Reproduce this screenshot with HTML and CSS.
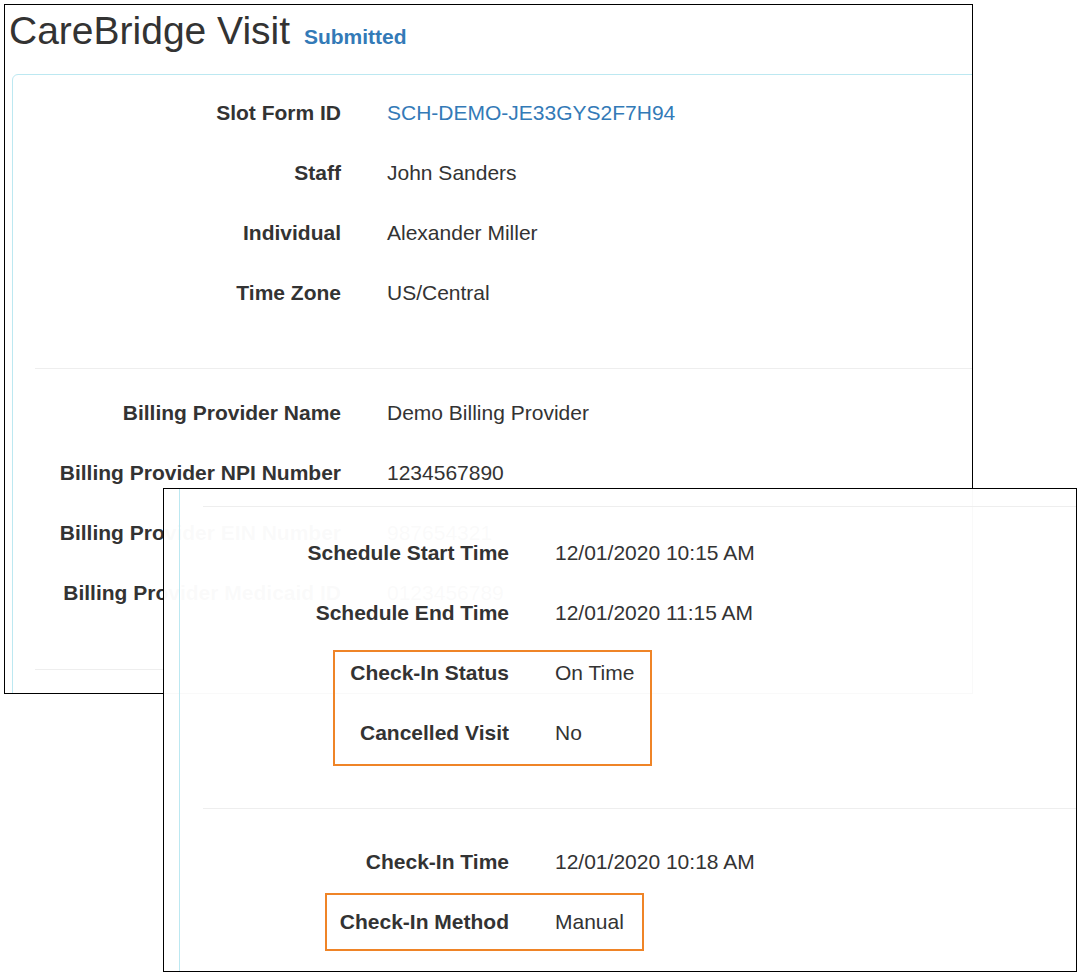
FILE: index.html
```html
<!DOCTYPE html>
<html lang="en">
<head>
<meta charset="utf-8">
<title>CareBridge Visit</title>
<link rel="stylesheet" href="styles.css">
</head>
<body>
<div class="desk">
  <section class="win win-back">
    <h1 class="title">CareBridge Visit <span class="status">Submitted</span></h1>
    <div class="panel">
      <div class="group g-top">
        <div class="row"><div class="lbl">Slot Form ID</div><div class="val link">SCH-DEMO-JE33GYS2F7H94</div></div>
        <div class="row"><div class="lbl">Staff</div><div class="val">John Sanders</div></div>
        <div class="row"><div class="lbl">Individual</div><div class="val">Alexander Miller</div></div>
        <div class="row"><div class="lbl">Time Zone</div><div class="val">US/Central</div></div>
      </div>
      <hr class="sep">
      <div class="group g-billing">
        <div class="row"><div class="lbl">Billing Provider Name</div><div class="val">Demo Billing Provider</div></div>
        <div class="row"><div class="lbl">Billing Provider NPI Number</div><div class="val">1234567890</div></div>
        <div class="row"><div class="lbl">Billing Provider EIN Number</div><div class="val">987654321</div></div>
        <div class="row"><div class="lbl">Billing Provider Medicaid ID</div><div class="val">0123456789</div></div>
      </div>
      <hr class="sep">
      <div class="tail"></div>
    </div>
  </section>

  <section class="win win-front">
    <div class="panel panel-cut">
      <div class="lead"></div>
      <hr class="sep">
      <div class="group g-schedule">
        <div class="row"><div class="lbl">Schedule Start Time</div><div class="val">12/01/2020 10:15 AM</div></div>
        <div class="row"><div class="lbl">Schedule End Time</div><div class="val">12/01/2020 11:15 AM</div></div>
        <div class="row"><div class="lbl">Check-In Status</div><div class="val">On Time</div></div>
        <div class="row"><div class="lbl">Cancelled Visit</div><div class="val">No</div></div>
      </div>
      <hr class="sep">
      <div class="group g-checkin">
        <div class="row"><div class="lbl">Check-In Time</div><div class="val">12/01/2020 10:18 AM</div></div>
        <div class="row"><div class="lbl">Check-In Method</div><div class="val">Manual</div></div>
      </div>
    </div>
    <div class="mark mark-status"></div>
    <div class="mark mark-method"></div>
  </section>
</div>
</body>
</html>
```

FILE: styles.css
```css
* { box-sizing: border-box; }

html, body {
  margin: 0;
  padding: 0;
  background: #ffffff;
}

body {
  font-family: "Liberation Sans", Arial, Helvetica, sans-serif;
  color: #333333;
}

.desk {
  position: relative;
  width: 1084px;
  height: 978px;
  padding: 4px 0 0 4px;
  overflow: hidden;
}

.win {
  border: 1px solid #000000;
  background: #ffffff;
  overflow: hidden;
}

.win-back {
  width: 969px;
  height: 690px;
}

.win-front {
  position: absolute;
  left: 163px;
  top: 488px;
  width: 914px;
  height: 484px;
  background: rgba(255, 255, 255, 0.975);
}

.title {
  margin: 0;
  padding: 4px 0 0 4px;
  font-size: 39px;
  font-weight: normal;
  line-height: 43px;
  height: 47px;
  color: #333333;
  white-space: nowrap;
}

.status {
  margin-left: 3px;
  font-size: 21px;
  line-height: 1;
  font-weight: bold;
  color: #337ab7;
}

.panel {
  margin: 22px -80px 0 7px;
  border: 1px solid #bce8f1;
  border-radius: 6px;
  padding: 0 0 0 22px;
}

.tail { height: 120px; }

.panel-cut {
  margin: 0 -80px 0 15px;
  border: 0;
  border-left: 1px solid #bce8f1;
  border-radius: 0;
  padding-left: 23px;
  min-height: 520px;
}

.lead { height: 17px; }

.sep {
  margin: 0;
  height: 0;
  border: 0;
  border-top: 1px solid #eeeeee;
}

.g-top { padding: 8px 0 45px; }
.g-billing { padding: 14px 0 46px; }
.g-schedule { padding: 16px 0 45px; }
.g-checkin { padding: 23px 0 0; }

.row {
  display: grid;
  grid-template-columns: 306px 1fr;
  column-gap: 46px;
  padding: 15px 0;
  font-size: 21px;
  line-height: 30px;
  white-space: nowrap;
}

.lbl {
  font-weight: bold;
  text-align: right;
  color: #333333;
}

.val { color: #333333; }
.val.link { color: #337ab7; }

.mark {
  position: absolute;
  border: 2px solid #ef8427;
}

.mark-status {
  left: 169px;
  top: 161px;
  width: 319px;
  height: 116px;
}

.mark-method {
  left: 161px;
  top: 404px;
  width: 319px;
  height: 58px;
}
```
